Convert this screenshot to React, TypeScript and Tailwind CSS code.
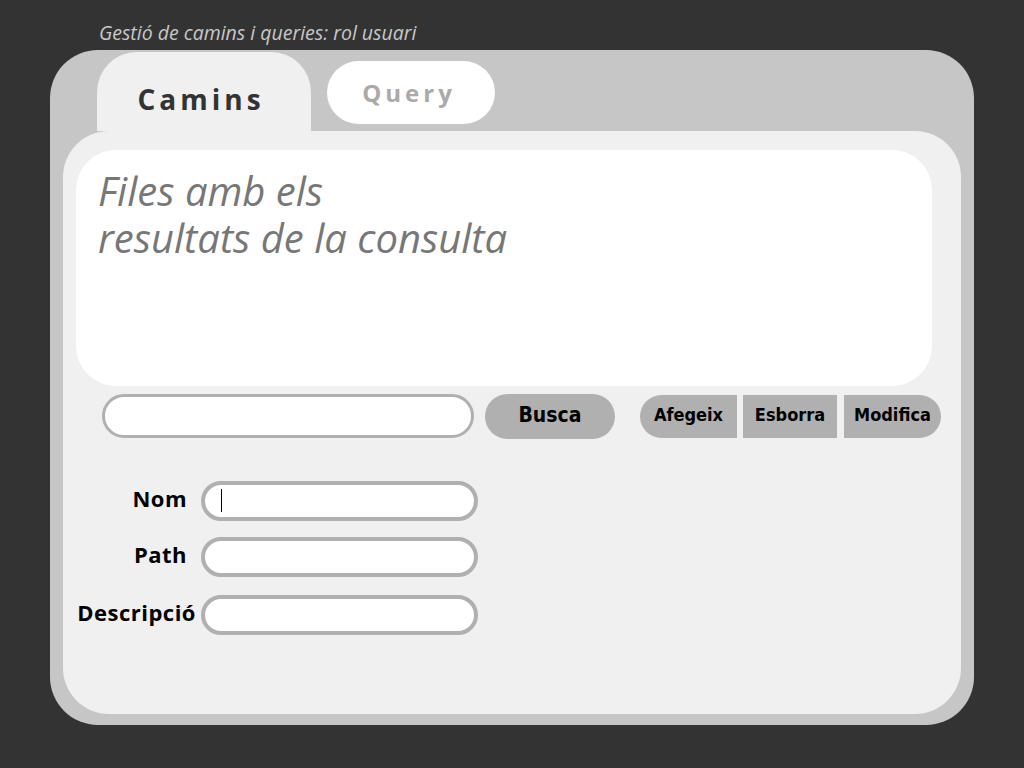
import React from "react";

const ui = { fontFamily: '"Open Sans", "Noto Sans", sans-serif' };
const narrow = {
  fontFamily: '"Ubuntu Condensed", "Liberation Sans Narrow", "DejaVu Sans Condensed", "Open Sans", sans-serif',
};

function Field({ label, pr, caret }: { label: string; pr: string; caret?: boolean }) {
  return (
    <div className="flex items-center h-[40px]">
      <div
        className={`w-[125px] pb-[6px] text-right text-[22px] leading-[30px] tracking-[0.5px] font-bold text-black whitespace-nowrap ${pr}`}
        style={ui}
      >
        {label}
      </div>
      <div className="relative w-[277px] h-[40px] rounded-full border-4 border-[#b0b0b0] bg-white">
        {caret && <span className="absolute left-[16px] top-[4px] w-px h-[23px] bg-black" />}
      </div>
    </div>
  );
}

export default function App() {
  return (
    <main className="w-[1024px] h-[768px] bg-[#333333] overflow-hidden" style={ui}>
      <div className="h-[50px] pl-[99px] pt-[20px] text-[19.5px] leading-[26px] italic text-[#c8c8c8]">
        Gestió de camins i queries: rol usuari
      </div>

      <div className="ml-[50px] w-[924px] h-[675px] bg-[#c6c6c6] rounded-[48px] px-[13px] pb-[11px] flex flex-col">
        {/* pestanyes */}
        <div className="h-[81px] flex items-end pl-[34px] shrink-0">
          <div className="w-[214px] h-[79px] rounded-t-[40px] bg-[#f0f0f0] flex items-center justify-center pt-[14px] pr-[6px]">
            <span className="text-[28px] font-bold tracking-[4px] text-[#333]">Camins</span>
          </div>
          <div className="self-start mt-[11px] ml-[16px] w-[168px] h-[63px] rounded-full bg-white flex items-center justify-center pr-[4px]">
            <span className="text-[24px] font-bold tracking-[4px] text-[#aaaaaa]">Query</span>
          </div>
        </div>

        {/* panell */}
        <div className="flex-1 bg-[#f0f0f0] rounded-[46px] pt-[19px] pl-[13px] flex flex-col">
          <div className="w-[856px] h-[236px] bg-white rounded-[40px] pl-[22px] pt-[17px] text-[40px] leading-[47px] italic text-[#777777]">
            <div>Files amb els</div>
            <div>resultats de la consulta</div>
          </div>

          <div className="flex items-center mt-[7px] h-[46px]">
            <div className="ml-[26px] w-[372px] h-[44px] shrink-0 rounded-full border-[3px] border-[#b0b0b0] bg-white" />
            <button
              className="ml-[11px] w-[130px] h-[45px] shrink-0 rounded-full bg-[#b0b0b0] text-[21px] font-bold text-black"
              style={narrow}
            >
              Busca
            </button>
            <div className="ml-[25px] flex gap-[6px] h-[43px] shrink-0" style={narrow}>
              <button className="w-[97px] pb-[3px] rounded-l-full bg-[#b0b0b0] text-[18px] font-bold text-black">
                Afegeix
              </button>
              <button className="w-[94px] pb-[3px] bg-[#b0b0b0] text-[18px] font-bold text-black">Esborra</button>
              <button className="w-[97px] pb-[3px] ml-px rounded-r-full bg-[#b0b0b0] text-[18px] font-bold text-black">
                Modifica
              </button>
            </div>
          </div>

          <div className="mt-[42px] flex flex-col">
            <Field label="Nom" pr="pr-[14px]" caret />
            <div className="mt-[16px]">
              <Field label="Path" pr="pr-[14px]" />
            </div>
            <div className="mt-[18px]">
              <Field label="Descripció" pr="pr-[5px]" />
            </div>
          </div>
        </div>
      </div>
    </main>
  );
}
